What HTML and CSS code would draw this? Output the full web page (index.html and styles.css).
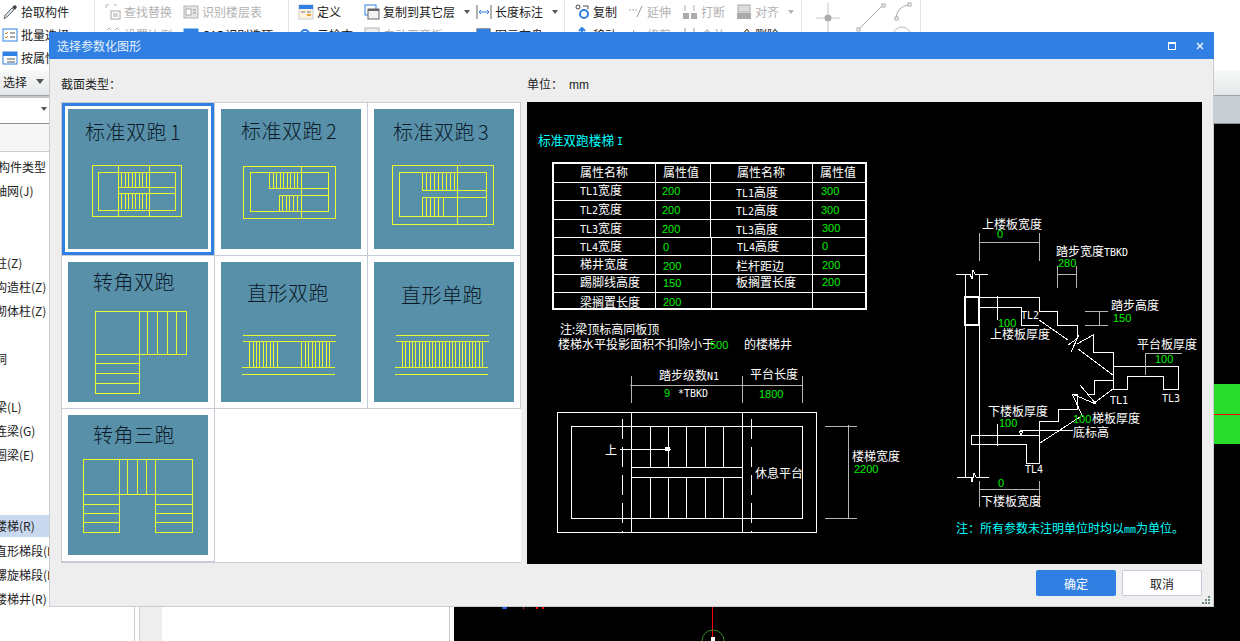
FILE: index.html
```html
<!DOCTYPE html>
<html lang="zh-CN">
<head>
  <meta charset="UTF-8">
  <title>选择参数化图形</title>
  <link rel="stylesheet" href="styles.css">
</head>
<body>
  <div class="app">
    <!-- ribbon -->
    <div class="ribbon">
      <div class="group group-pick">
        <div class="tool"><svg class="ico" viewBox="0 0 16 16"><path d="M2 15l1-4 7-7 2 2-7 7z" fill="#cfd6dc" stroke="#6b7680"/><path d="M10 3l3-2 2 2-2 3z" fill="#444"/></svg>拾取构件</div>
        <div class="tool"><svg class="ico" viewBox="0 0 16 16"><rect x="1" y="2" width="14" height="12" fill="#fff" stroke="#2f80e2"/><path d="M3 6l1 1 2-2M3 10l1 1 2-2" fill="none" stroke="#d9822b"/><path d="M8 6h5M8 10h5" stroke="#555"/></svg>批量选择</div>
        <div class="tool"><svg class="ico" viewBox="0 0 16 16"><rect x="1" y="2" width="14" height="12" fill="#fff" stroke="#2f80e2"/><rect x="1" y="2" width="14" height="4" fill="#2f80e2"/><path d="M5 9h8M5 12h8" stroke="#555"/></svg>按属性选择</div>
      </div>
      <div class="group group-find">
        <div class="tool off"><svg class="ico" viewBox="0 0 16 16"><path d="M1 1h3M1 1v3M9 1h3" stroke="#b5b5b5" fill="none"/><rect x="6" y="7" width="9" height="8" fill="none" stroke="#a8a8a8"/><path d="M8 10h5M8 12h5" stroke="#a8a8a8"/></svg>查找替换</div>
        <div class="tool off"><svg class="ico" viewBox="0 0 16 16"><rect x="1" y="2" width="14" height="12" fill="#e4e4e4" stroke="#b5b5b5"/><rect x="3" y="5" width="5" height="6" fill="#fff" stroke="#aaa"/><path d="M10 6h3M10 9h3" stroke="#999"/></svg>识别楼层表</div>
        <div class="tool off"><svg class="ico" viewBox="0 0 16 16"><path d="M2 3l2-2 2 2M10 3l2-2 2 2" stroke="#aaa" fill="none"/></svg>设置比例</div>
        <div class="tool"><svg class="ico" viewBox="0 0 16 16"><rect x="1" y="2" width="14" height="12" fill="#fff" stroke="#2f80e2"/><rect x="1" y="2" width="14" height="4" fill="#2f80e2"/></svg>CAD识别选项</div>
      </div>
      <div class="group group-define">
        <div class="tool"><svg class="ico" viewBox="0 0 16 16"><rect x="1" y="1" width="14" height="14" fill="#fdf3df" stroke="#c8ccd4"/><rect x="1" y="1" width="14" height="4" fill="#2f80e2"/><path d="M3 8h4M9 8h4" stroke="#777"/><path d="M9 11h4" stroke="#e8a33a" stroke-width="2"/></svg>定义</div>
        <div class="tool"><svg class="ico" viewBox="0 0 16 16"><rect x="1" y="1" width="11" height="10" fill="#fff" stroke="#2f80e2"/><rect x="4" y="5" width="11" height="10" fill="#f3f3f3" stroke="#666"/><rect x="4" y="5" width="11" height="2" fill="#666"/></svg>复制到其它层<i class="caret"></i></div>
        <div class="tool"><svg class="ico" viewBox="0 0 16 16"><path d="M1 1v14M15 1v14" stroke="#666"/><path d="M3 8h10M3 8l2-2M3 8l2 2M13 8l-2-2M13 8l-2 2" stroke="#2f80e2" fill="none"/></svg>长度标注<i class="caret"></i></div>
        <div class="tool"><svg class="ico" viewBox="0 0 16 16"><circle cx="7" cy="7" r="4" fill="none" stroke="#2f80e2" stroke-width="2"/></svg>云检查</div>
        <div class="tool off"><svg class="ico" viewBox="0 0 16 16"><rect x="1" y="1" width="14" height="5" fill="#eee" stroke="#b5b5b5"/></svg>自动平齐板</div>
        <div class="tool"><svg class="ico" viewBox="0 0 16 16"><rect x="1" y="2" width="13" height="12" fill="#fff" stroke="#333"/><rect x="1" y="2" width="13" height="3" fill="#2f80e2"/></svg>图元存盘</div>
      </div>
      <div class="group group-edit">
        <div class="tool"><svg class="ico" viewBox="0 0 16 16"><circle cx="4" cy="3" r="2" fill="none" stroke="#444"/><path d="M9 2h5v3" fill="none" stroke="#444"/><circle cx="10" cy="10" r="4" fill="none" stroke="#2f80e2" stroke-width="2"/></svg>复制</div>
        <div class="tool off"><svg class="ico" viewBox="0 0 16 16"><path d="M1 6h8" stroke="#aaa" stroke-dasharray="2 1"/><path d="M9 13l5-11" stroke="#999"/></svg>延伸</div>
        <div class="tool off"><svg class="ico" viewBox="0 0 16 16"><rect x="1" y="9" width="6" height="6" fill="#aaa"/><rect x="9" y="9" width="6" height="6" fill="#aaa"/><path d="M3 1v6M12 1v6" stroke="#aaa"/></svg>打断</div>
        <div class="tool off"><svg class="ico" viewBox="0 0 16 16"><rect x="2" y="1" width="12" height="7" fill="#ddd" stroke="#aaa"/><rect x="1" y="9" width="14" height="6" fill="#aaa"/></svg>对齐<i class="caret light"></i></div>
        <div class="tool"><svg class="ico" viewBox="0 0 16 16"><path d="M8 1v10M5 4l3-3 3 3" fill="none" stroke="#2f80e2" stroke-width="2"/></svg>移动</div>
        <div class="tool off"><svg class="ico" viewBox="0 0 16 16"><path d="M6 3l-4 10" stroke="#999"/></svg>修剪</div>
        <div class="tool off"><svg class="ico" viewBox="0 0 16 16"><path d="M3 1v6M12 1v6" stroke="#999"/></svg>合并</div>
        <div class="tool"><svg class="ico" viewBox="0 0 16 16"><path d="M3 11l8-9 2 3-6 7z" fill="#f2d8a8" stroke="#444"/></svg>删除</div>
      </div>
      <div class="group group-draw">
        <svg class="draw-ico" viewBox="0 0 119 32"><path d="M26 3v11M26 22v10M14 18h9M29 18h9" stroke="#c4c4c4" fill="none"/><circle cx="26" cy="18" r="3.5" fill="#aaa"/><path d="M57 29L80 6" stroke="#aaa"/><rect x="55" y="28" width="3" height="3" fill="#fff" stroke="#aaa"/><rect x="80" y="4" width="3" height="3" fill="#fff" stroke="#aaa"/><path d="M94 18Q95 7 106 5" fill="none" stroke="#aaa"/><rect x="93" y="17" width="3" height="3" fill="#fff" stroke="#aaa"/><rect x="106" y="3" width="3" height="3" fill="#fff" stroke="#aaa"/><circle cx="100" cy="36" r="9" fill="none" stroke="#bbb"/></svg>
      </div>
    </div>
    <div class="strip">选择<i class="caret"></i></div>
    <div class="subbar">
      <div class="combo"><i class="caret"></i></div>
    </div>

    <!-- page behind the dialog -->
    <div class="main">
      <div class="side">
        <div class="side-head"></div>
        <ul class="tree">
          <li class="root">构件类型</li>
          <li>轴网(J)</li>
          <li></li>
          <li></li>
          <li>柱(Z)</li>
          <li>构造柱(Z)</li>
          <li>砌体柱(Z)</li>
          <li></li>
          <li>洞</li>
          <li></li>
          <li>梁(L)</li>
          <li>连梁(G)</li>
          <li>圈梁(E)</li>
          <li></li>
          <li></li>
          <li class="current">楼梯(R)</li>
          <li class="sub">直形梯段(R)</li>
          <li class="sub">螺旋梯段(R)</li>
          <li class="sub">楼梯井(R)</li>
        </ul>
      </div>
      <div class="gutter"></div>
      <div class="panel"><div class="panel-strip"></div></div>
      <div class="gutter"></div>
      <div class="canvas">
        <span class="mark mark-blue"></span>
        <span class="mark mark-red1"></span>
        <span class="mark mark-red2"></span>
        <span class="mark mark-red3"></span>
        <span class="axis-line"></span>
        <svg class="axis-circle" viewBox="0 0 24 24"><circle cx="12" cy="12" r="11" fill="none" stroke="#2e8b1e"/><path d="M10 12V8h4v4" fill="#fff"/></svg>
        <div class="green-bar"><span></span></div>
      </div>
    </div>
  </div>

  <!-- dialog -->
  <div class="dialog">
    <div class="title">
      <span class="title-text">选择参数化图形</span>
      <span class="btn-max"></span>
      <svg class="btn-close" viewBox="0 0 8 8"><path d="M1 1l6 6M7 1L1 7" stroke="#fff" stroke-width="1.2"/></svg>
    </div>
    <div class="labels">
      <span class="label-type">截面类型：</span>
      <span>单位：<em class="unit">mm</em></span>
    </div>
    <div class="content">
      <div class="cells">
        <div class="cell">
          <svg class="thumb selected" viewBox="0 0 140 140">
            <text class="thumb-text" x="17" y="31">标准双跑 1</text>
            <rect class="y" x="24" y="56" width="89" height="51"/>
            <rect class="y" x="30" y="63" width="77" height="38"/>
            <path class="y" d="M50 56V107M81 56V107M50 78H107M50 84H107"/>
            <path class="y" d="M53 63V78M57 63V78M60 63V78M64 63V78M67 63V78M71 63V78M74 63V78M78 63V78M53 84V100M57 84V100M60 84V100M64 84V100M67 84V100M71 84V100M74 84V100M78 84V100"/>
          </svg>
        </div>
        <div class="cell">
          <svg class="thumb" viewBox="0 0 140 140">
            <text class="thumb-text" x="20" y="30">标准双跑 2</text>
            <rect class="y" x="22" y="57" width="92" height="52"/>
            <rect class="y" x="29" y="63" width="78" height="39"/>
            <path class="y" d="M80 57V109M48 63V79H107M58 102V86H107"/>
            <path class="y" d="M52 63V79M55 63V79M59 63V79M62 63V79M66 63V79M69 63V79M73 63V79M76 63V79M61 86V102M65 86V102M68 86V102M72 86V102M76 86V102"/>
          </svg>
        </div>
        <div class="cell">
          <svg class="thumb" viewBox="0 0 140 140">
            <text class="thumb-text" x="19" y="31">标准双跑 3</text>
            <rect class="y" x="18" y="56" width="101" height="59"/>
            <rect class="y" x="25" y="63" width="87" height="44"/>
            <path class="y" d="M83 56V115M48 63V81H112M48 107V88H112"/>
            <path class="y" d="M52 63V81M56 63V81M60 63V81M64 63V81M68 63V81M72 63V81M76 63V81M80 63V81M52 88V107M56 88V107M60 88V107M64 88V107M69 88V107"/>
          </svg>
        </div>
        <div class="cell">
          <svg class="thumb" viewBox="0 0 140 140">
            <text class="thumb-text" x="25" y="28">转角双跑</text>
            <path class="y" d="M27 49H118V92H71V131H27ZM71 49V92M27 92H71M79 49V92M89 49V92M99 49V92M108 49V92M27 101H71M27 111H71M27 121H71"/>
          </svg>
        </div>
        <div class="cell">
          <svg class="thumb" viewBox="0 0 140 140">
            <text class="thumb-text" x="26" y="39">直形双跑</text>
            <path class="y" d="M22 73H115M22 79H115M21 105H114M21 112H114"/>
            <path class="y" d="M28 79V105M32 79V105M35 79V105M38 79V105M42 79V105M45 79V105M49 79V105M52 79V105M56 79V105M80 79V105M84 79V105M87 79V105M91 79V105M94 79V105M98 79V105M101 79V105M105 79V105M108 79V105"/>
          </svg>
        </div>
        <div class="cell">
          <svg class="thumb" viewBox="0 0 140 140">
            <text class="thumb-text" x="27" y="41">直形单跑</text>
            <path class="y" d="M22 73H115M22 79H115M21 105H114M21 112H114"/>
            <path class="y" d="M28 79V105M31 79V105M35 79V105M38 79V105M41 79V105M45 79V105M48 79V105M51 79V105M55 79V105M58 79V105M61 79V105M65 79V105M68 79V105M71 79V105M75 79V105M78 79V105M81 79V105M85 79V105M88 79V105M91 79V105M95 79V105M98 79V105M101 79V105M105 79V105M108 79V105"/>
          </svg>
        </div>
        <div class="cell">
          <svg class="thumb" viewBox="0 0 140 140">
            <text class="thumb-text" x="25" y="28">转角三跑</text>
            <path class="y" d="M15 44H124V117H87V79H51V117H15ZM15 79H51M87 79H124M51 44V79M87 44V79M59 44V79M69 44V79M78 44V79"/>
            <path class="y" d="M15 89H51M15 98H51M15 107H51M87 89H124M87 98H124M87 107H124"/>
          </svg>
        </div>
      </div>

      <svg class="cad" viewBox="527 102 675 462">
        <text class="c heading" x="538" y="145">标准双跑楼梯 <tspan class="cm">I</tspan></text>

        <!-- property table -->
        <rect class="w w2" x="553" y="163" width="313" height="146"/>
        <path class="w" d="M655 163V309M710 163V237M711 237V309M812 163V309M553 182H866M553 200H866M553 219H866M553 237H866M553 255H866M553 274H866M553 292H866"/>
        <text class="t" x="580" y="177">属性名称</text>
        <text class="t" x="663" y="177">属性值</text>
        <text class="t" x="737" y="177">属性名称</text>
        <text class="t" x="820" y="177">属性值</text>

        <text class="t" x="580" y="195"><tspan class="m">TL1</tspan>宽度</text>
        <text class="g" x="662" y="195">200</text>
        <text class="t" x="736" y="197"><tspan class="m">TL1</tspan>高度</text>
        <text class="g" x="821" y="195">300</text>

        <text class="t" x="580" y="214"><tspan class="m">TL2</tspan>宽度</text>
        <text class="g" x="662" y="214">200</text>
        <text class="t" x="736" y="215"><tspan class="m">TL2</tspan>高度</text>
        <text class="g" x="821" y="214">300</text>

        <text class="t" x="580" y="233"><tspan class="m">TL3</tspan>宽度</text>
        <text class="g" x="662" y="233">200</text>
        <text class="t" x="736" y="234"><tspan class="m">TL3</tspan>高度</text>
        <text class="g" x="822" y="232">300</text>

        <text class="t" x="580" y="251"><tspan class="m">TL4</tspan>宽度</text>
        <text class="g" x="663" y="251">0</text>
        <text class="t" x="737" y="251"><tspan class="m">TL4</tspan>高度</text>
        <text class="g" x="822" y="250">0</text>

        <text class="t" x="580" y="269">梯井宽度</text>
        <text class="g" x="663" y="270">200</text>
        <text class="t" x="736" y="271">栏杆距边</text>
        <text class="g" x="822" y="269">200</text>

        <text class="t" x="580" y="287">踢脚线高度</text>
        <text class="g" x="663" y="287">150</text>
        <text class="t" x="736" y="287">板搁置长度</text>
        <text class="g" x="822" y="286">200</text>

        <text class="t" x="580" y="307">梁搁置长度</text>
        <text class="g" x="663" y="306">200</text>

        <text class="t" x="560" y="334">注:梁顶标高同板顶</text>
        <text class="t" x="558" y="349">楼梯水平投影面积不扣除小于</text>
        <text class="g" x="710" y="349">500</text>
        <text class="t" x="744" y="349">的楼梯井</text>

        <!-- plan -->
        <path class="d" d="M631 376V403M742 376V403M802 376V403M630 385H803"/>
        <text class="t" x="659" y="380">踏步级数<tspan class="m">N1</tspan></text>
        <text class="t" x="750" y="379">平台长度</text>
        <text class="g" x="664" y="397">9</text>
        <text class="m" x="678" y="397">*TBKD</text>
        <text class="g" x="759" y="398">1800</text>

        <rect class="w" x="557" y="412" width="259" height="120"/>
        <rect class="w" x="571" y="426" width="231" height="92"/>
        <path class="w" d="M631 412V532M742 412V532M631 467H742M631 477H742"/>
        <path class="w" d="M650 426V467M668 426V467M686 426V467M705 426V467M723 426V467M650 477V518M668 477V518M686 477V518M705 477V518M723 477V518"/>
        <path class="w dash" d="M622 419V532M751 419V532"/>
        <path class="w" d="M620 449H671"/>
        <rect class="fill" x="665" y="447" width="5" height="4"/>
        <text class="t" x="605" y="455">上</text>
        <text class="t" x="755" y="478">休息平台</text>
        <path class="d" d="M848 425V519M825 426H857M825 518H857"/>
        <text class="t" x="852" y="461">楼梯宽度</text>
        <text class="g" x="854" y="473">2200</text>

        <!-- section -->
        <path class="d" d="M979 233V261M1039 233V261M979 242H1040"/>
        <text class="t" x="982" y="229">上楼板宽度</text>
        <text class="g" x="997" y="238">0</text>
        <path class="d" d="M1057 266V288M1076 266V288M1057 274H1076"/>
        <text class="t" x="1056" y="256">踏步宽度<tspan class="m">TBKD</tspan></text>
        <text class="g" x="1058" y="267">280</text>
        <path class="d" d="M1085 311H1108M1085 325H1108M1099 311V325"/>
        <text class="t" x="1111" y="310">踏步高度</text>
        <text class="g" x="1113" y="322">150</text>

        <path class="w" d="M965 274V477M979 274V477M956 274H970L972 279L973 270L975 274H988M957 477H971L972 482L974 473L976 477H989"/>
        <rect class="w w2" x="965" y="297" width="14" height="28"/>
        <path class="w" d="M979 297H1039V311H1057V325H1077V337M979 307H1021V325H1039M997 296V320"/>
        <path class="w" d="M1039 320L1068 340M1071 352L1079 335M1068 345L1078 338M1078 349L1113 375M1077 344L1093 335V352H1113V366H1178V389H1163V376H1127V389H1113V366"/>
        <path class="w" d="M1113 380H1094V394H1087M1080 385L1096 404M1093 404L1113 389M1072 394L1096 404M1072 394L1083 417"/>
        <path class="w" d="M1072 394H1077V409H1058V421H1039V463H1026V444H971V435H1039M1040 443L1080 417M1020 430H1073M997 424V446M1019 431H1023L1021 435Z"/>
        <path class="d" d="M1145 353V375M1145 353H1182"/>

        <text class="t" x="1137" y="349">平台板厚度</text>
        <text class="g" x="1155" y="363">100</text>
        <text class="m" x="1021" y="319">TL2</text>
        <text class="g" x="998" y="327">100</text>
        <text class="t" x="990" y="339">上楼板厚度</text>
        <text class="m" x="1110" y="404">TL1</text>
        <text class="m" x="1162" y="402">TL3</text>
        <text class="t" x="988" y="416">下楼板厚度</text>
        <text class="g" x="999" y="427">100</text>
        <text class="g" x="1073" y="423">100</text>
        <text class="t" x="1092" y="423">梯板厚度</text>
        <text class="t" x="1073" y="437">底标高</text>
        <text class="m" x="1025" y="473">TL4</text>

        <path class="d" d="M979 481V507M1039 481V507M979 489H1040"/>
        <text class="g" x="998" y="487">0</text>
        <text class="t" x="981" y="506">下楼板宽度</text>

        <text class="c" x="956" y="533">注：所有参数未注明单位时均以<tspan class="cm">mm</tspan>为单位。</text>
      </svg>
    </div>
    <div class="actions">
      <button class="btn btn-ok">确定</button>
      <button class="btn btn-cancel">取消</button>
    </div>
    <svg class="grip" viewBox="0 0 8 8"><path d="M6 0h2v2H6zM3 3h2v2H3zM6 3h2v2H6zM0 6h2v2H0zM3 6h2v2H3zM6 6h2v2H6z" fill="#6b8a80"/></svg>
  </div>
</body>
</html>
```

FILE: styles.css
```css
* { box-sizing: border-box; }
html, body {
  margin: 0;
  height: 100%;
  overflow: hidden;
}
body {
  font-family: "Noto Sans CJK SC", "Liberation Sans", sans-serif;
  font-size: 12px;
  color: #222;
  background: #fff;
}
.app {
  display: flex;
  flex-direction: column;
  height: 641px;
}

/* ribbon */
.ribbon {
  display: flex;
  height: 70px;
  background: #fff;
  flex: none;
}
.group {
  display: grid;
  grid-auto-rows: 23px;
  border-right: 1px solid #e2e4e6;
  height: 70px;
  white-space: nowrap;
}
.group-pick { width: 95px; padding-left: 2px; }
.group-find { width: 194px; padding-left: 10px; grid-template-columns: 78px 1fr; }
.group-define { width: 276px; padding-left: 9px; grid-template-columns: 66px 112px 1fr; }
.group-edit { width: 237px; padding-left: 9px; grid-template-columns: repeat(4, 54px); }
.group-draw { width: 119px; display: block; }
.draw-ico { display: block; width: 119px; height: 32px; }
.tool {
  display: flex;
  align-items: center;
  gap: 3px;
  line-height: 23px;
}
.tool.off { color: #b2b2b2; }
.ico { width: 16px; height: 16px; flex: none; }
.caret {
  display: inline-block;
  width: 0;
  height: 0;
  margin-left: 6px;
  border: 3.5px solid transparent;
  border-top: 4px solid #555;
  border-bottom: 0;
}
.caret.light { border-top-color: #b2b2b2; }

.strip {
  display: flex;
  align-items: center;
  flex: none;
  height: 25px;
  padding: 0 0 3px 3px;
  font-size: 12px;
  background: linear-gradient(#f8f9f9, #e4e7e8);
}
.strip .caret { margin-left: 9px; border-width: 4px; border-top-width: 5px; }
.subbar {
  display: flex;
  flex: none;
  height: 29px;
  background: #c8ced2;
  border-top: 1px solid #a0a5a8;
  border-bottom: 1px solid #8a8e90;
}
.combo {
  width: 135px;
  background: #fff;
  border-top: 2px solid #c4c6c8;
  padding: 9px 0 0 41px;
  border-right: 1px solid #c8ccd4;
}
.combo .caret { margin: 0; display: block; }

/* page behind the dialog */
.main {
  display: flex;
  flex: 1;
  min-height: 0;
}
.side {
  width: 135px;
  flex: none;
  border-right: 1px solid #c8ccd4;
  overflow: hidden;
}
.side-head {
  height: 28px;
  background: #f6f6f6;
  border-bottom: 1px solid #ccc;
}
.tree {
  list-style: none;
  margin: 3px 0 0 -5px;
  padding: 0;
  width: 160px;
}
.tree li {
  height: 24px;
  line-height: 24px;
  white-space: nowrap;
}
.tree .root { padding-left: 3px; }
.tree .current {
  background: #c7d8ef;
  height: 22px;
  line-height: 22px;
  margin-bottom: 2px;
}
.gutter { width: 4px; flex: none; }
.panel {
  width: 311px;
  flex: none;
  border-left: 1px solid #c8ccd4;
  border-right: 1px solid #c8ccd4;
}
.panel-strip { width: 22px; height: 100%; background: #eee; }
.canvas {
  flex: 1;
  position: relative;
  background: #000;
}
.mark { position: absolute; top: 483px; height: 2px; }
.mark-blue { left: 48px; width: 5px; background: #2a5bd7; }
.mark-red1 { left: 69px; width: 1px; background: #c0392b; }
.mark-red2 { left: 82px; width: 2px; background: #e00; }
.mark-red3 { left: 88px; width: 2px; background: #e00; }
.axis-line {
  position: absolute;
  left: 258px;
  top: 470px;
  bottom: 0;
  width: 1px;
  background: #f00;
}
.axis-circle {
  position: absolute;
  left: 247px;
  top: 505px;
  width: 24px;
  height: 24px;
}
.green-bar {
  position: absolute;
  right: 0;
  top: 260px;
  width: 26px;
  height: 60px;
  padding-top: 30px;
  background: #2add2c;
}
.green-bar span {
  display: block;
  height: 1px;
  background: #f00;
}

/* dialog */
.dialog {
  position: absolute;
  left: 49px;
  top: 32px;
  width: 1165px;
  height: 575px;
  display: flex;
  flex-direction: column;
  background: #eee;
  border: 1px solid #c8ccd4;
  border-top: 0;
}
.title {
  display: flex;
  align-items: center;
  height: 27px;
  flex: none;
  margin: 0 -1px;
  padding: 0 10px 0 8px;
  background: #2f80e2;
  color: #e8f0fb;
}
.title-text { flex: 1; }
.btn-max {
  width: 8px;
  height: 8px;
  border: 1px solid #fff;
  border-top-width: 2px;
  margin-right: 20px;
}
.btn-close { width: 8px; height: 8px; }
.labels {
  display: flex;
  align-items: center;
  height: 43px;
  flex: none;
  padding: 5px 0 0 11px;
  font-family: "Noto Sans CJK TC", "Liberation Sans", sans-serif;
}
.label-type { width: 466px; }
.unit { font-style: normal; font-family: "Liberation Sans", sans-serif; margin-left: 6px; }
.content {
  display: flex;
  flex: none;
  height: 462px;
  padding-left: 11px;
  gap: 6px;
}
.cells {
  display: grid;
  grid-template-columns: repeat(3, 153px);
  grid-auto-rows: 153px;
  align-content: start;
  width: 460px;
  height: 461px;
  background: #fff;
  border: 1px solid #c8ccd4;
  border-right: 0;
}
.cell {
  padding: 6px;
  border-right: 1px solid #c8ccd4;
  border-bottom: 1px solid #c8ccd4;
}
.thumb {
  display: block;
  width: 140px;
  height: 140px;
  background: #5890aa;
}
.thumb.selected {
  outline: 3px solid #2f80e2;
  outline-offset: 3px;
}
.thumb-text {
  font-size: 20px;
  letter-spacing: .5px;
  word-spacing: -2px;
  fill: #0b1a28;
  font-weight: 300;
}
.y {
  fill: none;
  stroke: #ecff2e;
  stroke-width: 1;
  shape-rendering: crispEdges;
}
.cad {
  display: block;
  width: 675px;
  height: 462px;
  background: #000;
}
.w {
  fill: none;
  stroke: #fff;
  stroke-width: 1;
  shape-rendering: crispEdges;
}
.w2 { stroke-width: 2; }
.dash { stroke-dasharray: 20 8; }
.d {
  fill: none;
  stroke: #b4b4b4;
  stroke-width: 1;
  shape-rendering: crispEdges;
}
.fill { fill: #fff; }
.t { fill: #fff; font-size: 12px; }
.g {
  fill: #00f000;
  font-family: "Liberation Sans", sans-serif;
  font-size: 11px;
}
.c { fill: #00ffff; font-size: 12px; }
.heading { font-size: 12.7px; }
.m {
  fill: #fff;
  font-family: "DejaVu Sans Mono", monospace;
  font-size: 10px;
}
.cm {
  fill: #00ffff;
  font-family: "DejaVu Sans Mono", monospace;
  font-size: 10px;
}
.actions {
  display: flex;
  justify-content: flex-end;
  gap: 6px;
  padding: 6px 11px 0 0;
}
.btn {
  width: 80px;
  height: 26px;
  border-radius: 2px;
  font: inherit;
  padding: 0;
}
.btn-ok { background: #2f80e2; border: 0; color: #fff; }
.btn-cancel { background: #fff; border: 1px solid #c5c9d8; color: #222; }
.grip {
  position: absolute;
  right: 3px;
  bottom: 2px;
  width: 8px;
  height: 8px;
}
```
